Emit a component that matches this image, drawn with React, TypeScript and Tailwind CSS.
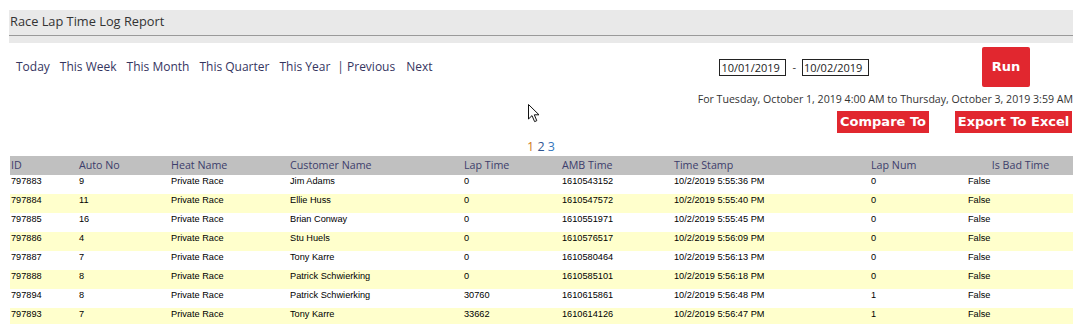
import React from "react";

const rows = [
  ["797883", "9", "Private Race", "Jim Adams", "0", "1610543152", "10/2/2019 5:55:36 PM", "0", "False"],
  ["797884", "11", "Private Race", "Ellie Huss", "0", "1610547572", "10/2/2019 5:55:40 PM", "0", "False"],
  ["797885", "16", "Private Race", "Brian Conway", "0", "1610551971", "10/2/2019 5:55:45 PM", "0", "False"],
  ["797886", "4", "Private Race", "Stu Huels", "0", "1610576517", "10/2/2019 5:56:09 PM", "0", "False"],
  ["797887", "7", "Private Race", "Tony Karre", "0", "1610580464", "10/2/2019 5:56:13 PM", "0", "False"],
  ["797888", "8", "Private Race", "Patrick Schwierking", "0", "1610585101", "10/2/2019 5:56:18 PM", "0", "False"],
  ["797894", "8", "Private Race", "Patrick Schwierking", "30760", "1610615861", "10/2/2019 5:56:48 PM", "1", "False"],
  ["797893", "7", "Private Race", "Tony Karre", "33662", "1610614126", "10/2/2019 5:56:47 PM", "1", "False"],
];

const headers = ["ID", "Auto No", "Heat Name", "Customer Name", "Lap Time", "AMB Time", "Time Stamp", "Lap Num", "Is Bad Time"];

const grid = "grid grid-cols-[68px_92px_119px_174px_98px_112px_197px_97px_107px]";
const btnFont = { fontFamily: '"DejaVu Sans", Verdana, sans-serif' };

export default function App() {
  return (
    <div className="relative w-[1085px] h-[324px] overflow-hidden bg-white text-[#333]" style={{ fontFamily: '"Open Sans", "Noto Sans", sans-serif' }}>
      <div className="ml-[9px] w-[1064px] pt-[10px]">
        {/* Title band */}
        <div className="bg-[#e9e9e9] h-[33px]">
          <div className="h-[26px] border-b border-[#9a9a9a] pl-[1px] pt-[1px] text-[12.8px] leading-[20px] text-[#333]">
            Race Lap Time Log Report
          </div>
        </div>

        {/* Toolbar */}
        <div className="flex items-center h-[40px] mt-[4px]">
          <div className="flex items-center pl-[7px] text-[12px] text-[#35355f]">
            <span>Today</span>
            <span className="ml-[10px]">This Week</span>
            <span className="ml-[10px]">This Month</span>
            <span className="ml-[10px]">This Quarter</span>
            <span className="ml-[10px]">This Year</span>
            <span className="ml-[7px]">| Previous</span>
            <span className="ml-[11px]">Next</span>
          </div>
          <div className="ml-auto flex items-center text-[11px]">
            <div className="w-[67px] h-[17px] border border-[#222] leading-[15px] pl-[1px] text-[#222]">10/01/2019</div>
            <span className="mx-[6px]">-</span>
            <div className="w-[67px] h-[17px] border border-[#222] leading-[15px] pl-[1px] text-[#222]">10/02/2019</div>
          </div>
          <div className="ml-[113px] mr-[43px] w-[48px] h-[40px] bg-[#e1272f] rounded-[2px] flex items-center justify-center text-white font-bold text-[13px]" style={btnFont}>
            Run
          </div>
        </div>

        <div className="mt-[5px] text-right text-[10.6px] leading-[14px] text-[#333]">
          For Tuesday, October 1, 2019 4:00 AM to Thursday, October 3, 2019 3:59 AM
        </div>

        <div className="mt-[5px] flex justify-end gap-[26px] pr-[1px]">
          <div className="h-[22px] w-[92px] bg-[#e1272f] flex items-center justify-center text-white font-bold text-[13px]" style={btnFont}>
            Compare To
          </div>
          <div className="h-[22px] w-[117px] bg-[#e1272f] flex items-center justify-center text-white font-bold text-[13px]" style={btnFont}>
            Export To Excel
          </div>
        </div>

        <div className="mt-[5px] h-[18px] text-center text-[12.5px] leading-[18px]">
          <span className="text-[#d07a1c]">1</span> <span className="text-[#2f5591]">2</span> <span className="text-[#3677bd]">3</span>
        </div>

        {/* Table */}
        <div className="ml-[1px] w-[1063px]">
          <div className={`${grid} h-[19px] bg-[#c0c0c0] text-[10.7px] leading-[19px] text-[#3d3d6b]`}>
            {headers.map((h, i) => (
              <div key={h} className={i === 8 ? "text-center" : "pl-[1px]"}>{h}</div>
            ))}
          </div>
          {rows.map((r, ri) => (
            <div key={ri} className={`${grid} h-[19px] text-[9.2px] leading-[12px] text-black ${ri % 2 === 1 ? "bg-[#ffffcc]" : "bg-white"}`} style={{ fontFamily: '"Liberation Sans", Arial, sans-serif' }}>
              {r.map((c, ci) => (
                <div key={ci} className="pl-[1px]">{c}</div>
              ))}
            </div>
          ))}
        </div>
      </div>

      {/* Mouse cursor */}
      <svg className="absolute left-[528px] top-[104px]" width="14" height="20" viewBox="0 0 14 20">
        <path d="M0.5 0.5 L0.5 15 L4 11.6 L6.6 17.6 L8.8 16.7 L6.3 10.8 L11 10.8 Z" fill="white" stroke="#111" strokeWidth="1" strokeLinejoin="miter" />
      </svg>
    </div>
  );
}
